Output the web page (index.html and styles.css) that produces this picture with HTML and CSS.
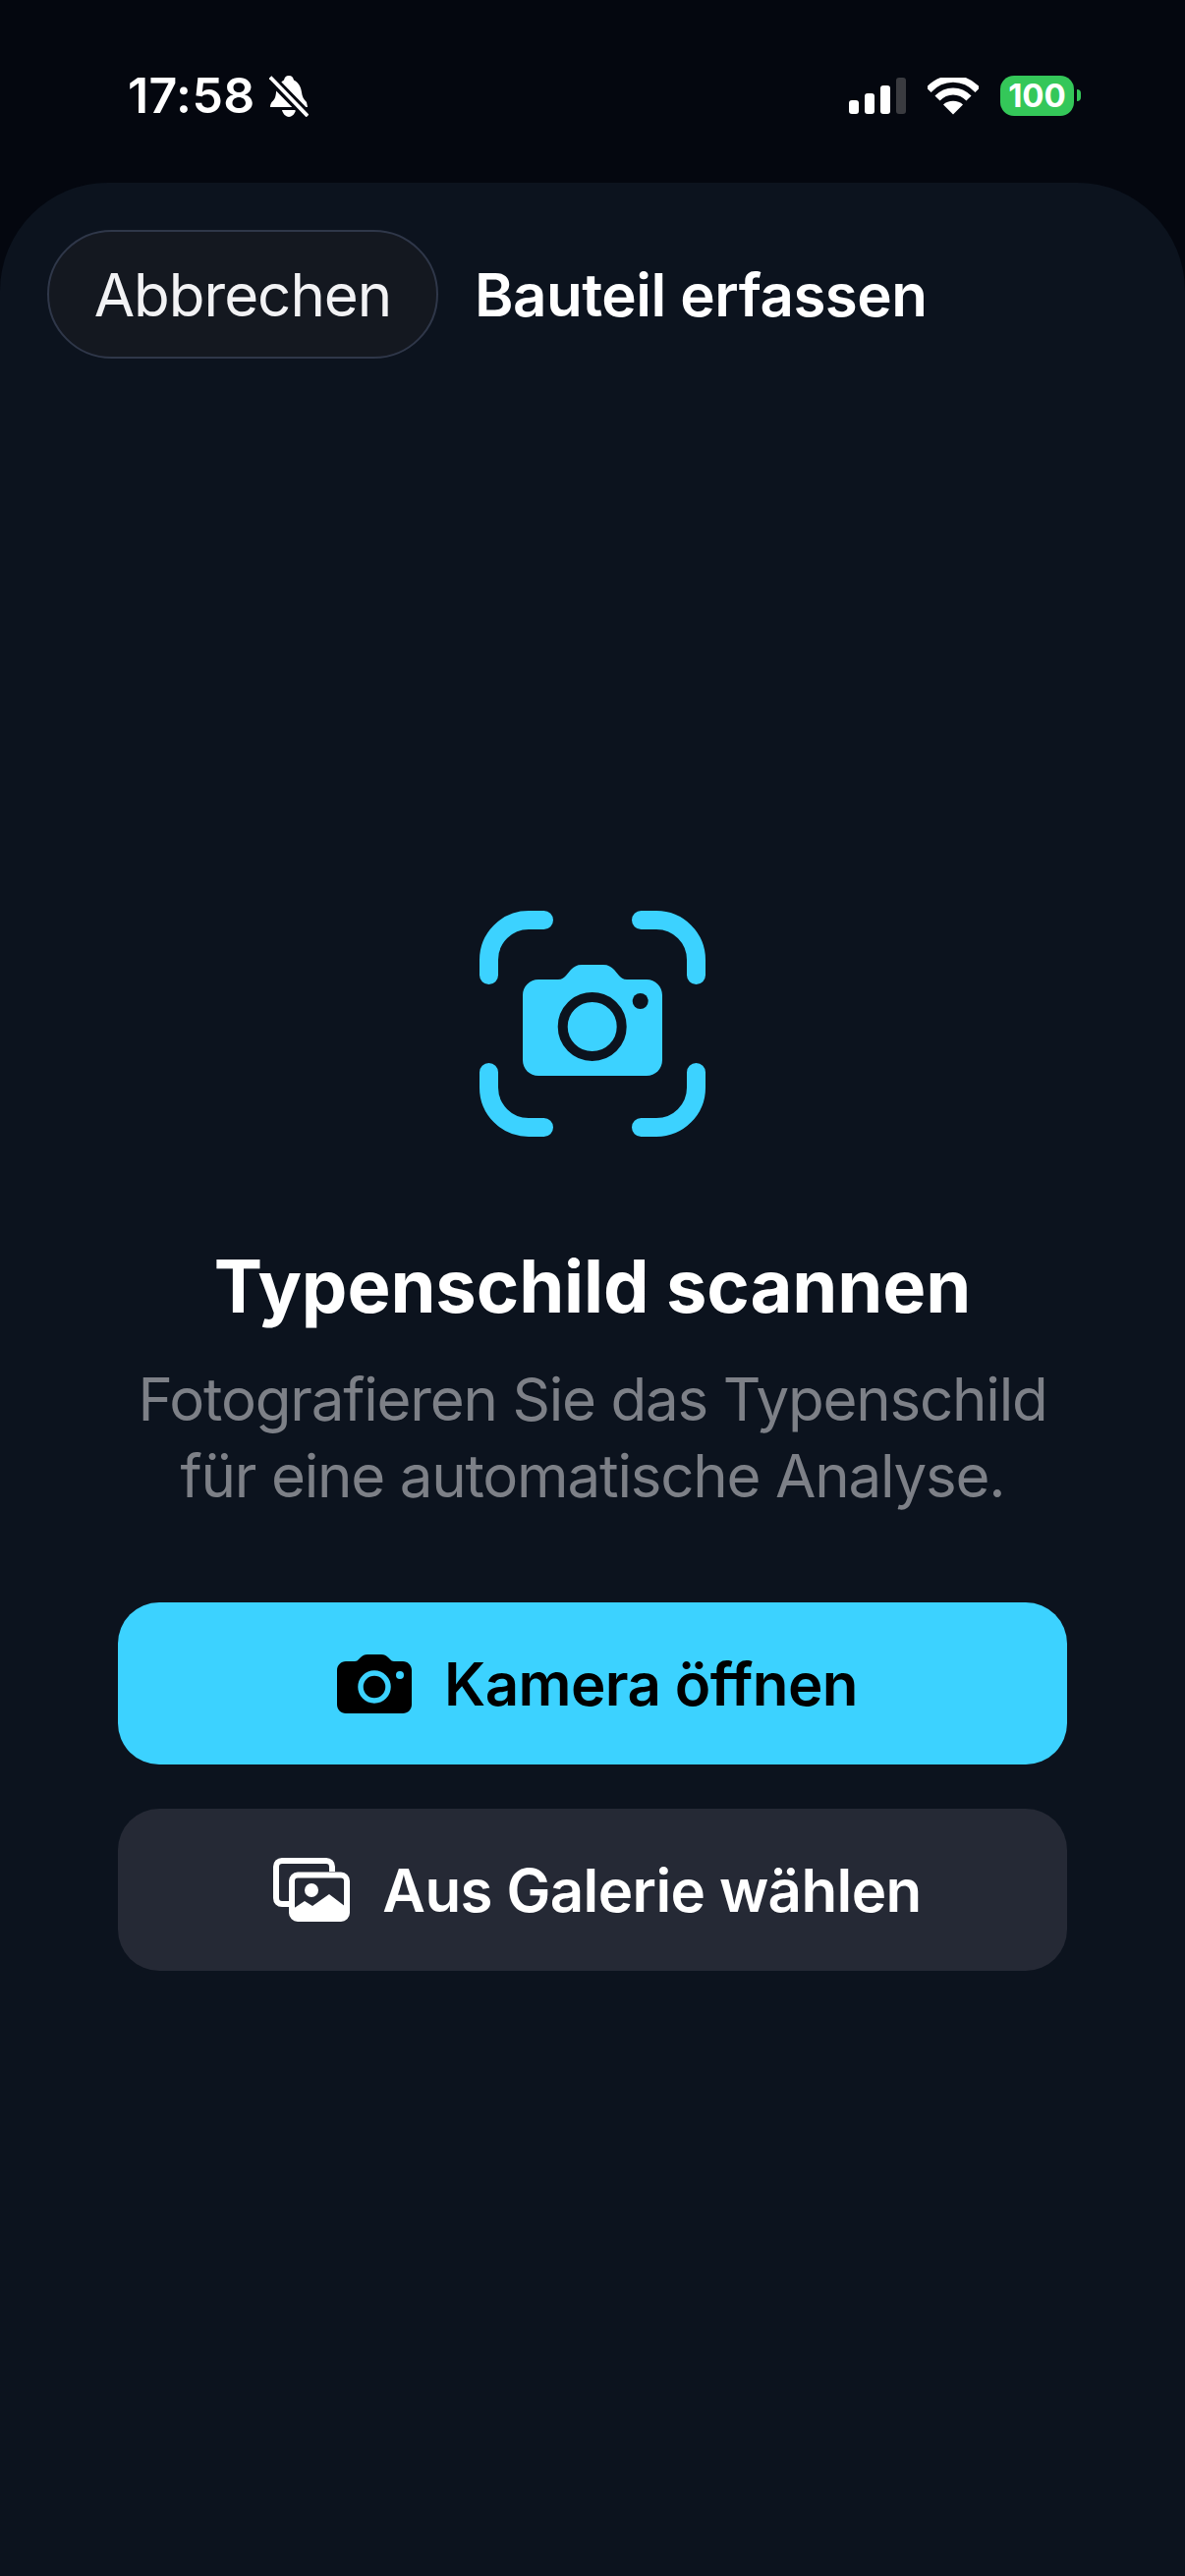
FILE: index.html
```html
<!DOCTYPE html>
<html lang="de">
<head>
    <meta charset="UTF-8">
    <title>Bauteil erfassen</title>
    <link rel="stylesheet" href="styles.css">
</head>
<body>
<div id="screen">
    <div class="status">
        <div class="status-left">
            <span class="time">17:58</span>
            <svg class="bell" width="40" height="42" viewBox="0 0 40 42">
                <path d="M20 0c3 0 4.500 2 5 4.500C30 7 32.500 12 33 17c.4 4 2 7 5 10l1 5H1c0-2 .5-3.500 1.500-5 3-2.500 4-5 4.500-10C7.500 11 11 7 15 4.500 15.500 2 17 0 20 0z" fill="#fff"/>
                <path d="M13 35h14c-.5 3-3.500 7-7 7s-6.500-4-7-7z" fill="#fff"/>
                <path d="M-1 0 L40 42" stroke="#04070f" stroke-width="10"/>
                <path d="M1 1.500 L39 41" stroke="#fff" stroke-width="3.800"/>
            </svg>
        </div>
        <div class="status-right">
            <div class="signal">
                <i class="bar b1"></i>
                <i class="bar b2"></i>
                <i class="bar b3"></i>
                <i class="bar b4"></i>
            </div>
            <svg class="wifi" width="52" height="38" viewBox="0 0 52 38">
                <path d="M1 12.500C15 -2.500 37 -2.500 51 12.500" fill="none" stroke="#fff" stroke-width="7"/>
                <path d="M10 21C19 11.500 33 11.500 42 21" fill="none" stroke="#fff" stroke-width="7"/>
                <path d="M26 37.500 L16 27.500C21 22.500 31 22.500 36 27.500z" fill="#fff"/>
            </svg>
            <div class="battery">
                <span class="level">100</span>
                <i class="nub"></i>
            </div>
        </div>
    </div>

    <div class="sheet">
        <div class="topbar">
            <button class="cancel">Abbrechen</button>
            <span class="title">Bauteil erfassen</span>
        </div>

        <div class="content">
            <svg class="scan" width="230" height="230" viewBox="0 0 230 230">
                <g fill="none" stroke="#3cd2ff" stroke-width="19" stroke-linecap="round">
                    <path d="M9.500 65.500V50A40.500 40.500 0 0 1 50 9.500H65.500"/>
                    <path d="M164.500 9.500H180A40.500 40.500 0 0 1 220.500 50V65.500"/>
                    <path d="M9.500 164.500V180A40.500 40.500 0 0 0 50 220.500H65.500"/>
                    <path d="M164.500 220.500H180A40.500 40.500 0 0 0 220.500 180V164.500"/>
                </g>
                <path d="M60 70H80C84 70 86 68 88 66L93 60C96 57 99 55 104 55H126C131 55 134 57 137 60L142 66C144 68 146 70 150 70H170C179 70 186 77 186 86V152C186 161 179 168 170 168H60C51 168 44 161 44 152V86C44 77 51 70 60 70z" fill="#3cd2ff"/>
                <circle cx="114.700" cy="118" r="30" fill="none" stroke="#0c131e" stroke-width="10"/>
                <circle cx="163.700" cy="92" r="8" fill="#0c131e"/>
            </svg>

            <h1>Typenschild scannen</h1>
            <p class="hint">Fotografieren Sie das Typenschild<br>für eine automatische Analyse.</p>

            <div class="actions">
                <button class="btn primary">
                    <svg width="76" height="60" viewBox="0 0 76 60">
                        <path d="M9 7H18C20 7 21 6 22 5L24 3C26 1 28 0 31 0H45C48 0 50 1 52 3L54 5C55 6 56 7 58 7H67C72 7 76 11 76 16V51C76 56 72 60 67 60H9C4 60 0 56 0 51V16C0 11 4 7 9 7z" fill="#000"/>
                        <circle cx="38" cy="33" r="14" fill="none" stroke="#3cd2ff" stroke-width="5.500"/>
                        <circle cx="64" cy="21" r="4" fill="#3cd2ff"/>
                    </svg>
                    <span>Kamera öffnen</span>
                </button>
                <button class="btn secondary">
                    <svg width="78" height="65" viewBox="0 0 78 65">
                        <path d="M16 47H9C5.500 47 3 44.500 3 41V9C3 5.500 5.500 3 9 3H54C57.500 3 60 5.500 60 9V14" fill="none" stroke="#fff" stroke-width="6"/>
                        <rect x="19" y="17.500" width="56" height="44.500" rx="6" fill="none" stroke="#fff" stroke-width="6"/>
                        <path d="M20 52L32 44L40 49L57 37L74 50V58L70 63H24L20 58z" fill="#fff"/>
                        <circle cx="39" cy="33" r="7" fill="#fff"/>
                    </svg>
                    <span>Aus Galerie wählen</span>
                </button>
            </div>
        </div>
    </div>
</div>
</body>
</html>
```

FILE: styles.css
```css
* {
    margin: 0;
    padding: 0;
    box-sizing: border-box;
}

body {
    width: 1206px;
    height: 2622px;
    overflow: hidden;
    background: #04070f;
    font-family: Inter, "Liberation Sans", sans-serif;
    color: #fff;
}

#screen {
    height: 100%;
    display: flex;
    flex-direction: column;
}

.status {
    height: 186px;
    flex-shrink: 0;
    display: flex;
    justify-content: space-between;
    align-items: flex-start;
    padding: 77px 113px 0 130px;
}

.status-left {
    display: flex;
    align-items: center;
    gap: 14px;
    height: 41px;
}

.time {
    font-size: 50px;
    font-weight: 600;
    line-height: 41px;
    letter-spacing: 0.4px;
}

.status-right {
    display: flex;
    align-items: flex-start;
    gap: 22px;
}

.signal {
    display: flex;
    align-items: flex-end;
    gap: 6px;
    height: 37px;
    margin-top: 2px;
}

.bar {
    display: block;
    width: 10px;
    background: #fff;
    border-radius: 3px;
}

.b1 { height: 14px; }
.b2 { height: 21px; }
.b3 { height: 29px; }
.b4 { height: 37px; background: #3a3b40; }

.wifi {
    margin-top: 2px;
}

.battery {
    position: relative;
    width: 75px;
    height: 41px;
    background: #34c759;
    border-radius: 14px;
    display: flex;
    align-items: center;
    justify-content: center;
}

.level {
    font-size: 33px;
    font-weight: 700;
    line-height: 41px;
}

.nub {
    position: absolute;
    left: 78px;
    top: 14px;
    width: 4px;
    height: 12px;
    background: #34c759;
    border-radius: 0 6px 6px 0;
}

.sheet {
    flex: 1;
    background: #0c131e;
    border-radius: 110px 110px 0 0;
    display: flex;
    flex-direction: column;
}

.topbar {
    display: flex;
    align-items: center;
    gap: 37px;
    padding: 48px 48px 0;
}

.cancel {
    width: 398px;
    height: 131px;
    border-radius: 66px;
    border: 2px solid #2f3749;
    background: #141820;
    color: #f2f2f4;
    font-family: inherit;
    font-size: 60px;
    font-weight: 400;
    letter-spacing: -1px;
}

.title {
    font-size: 60px;
    font-weight: 600;
    letter-spacing: -0.5px;
}

.content {
    display: flex;
    flex-direction: column;
    align-items: center;
    padding: 562px 120px 0;
}

h1 {
    margin-top: 108px;
    font-size: 74px;
    font-weight: 700;
    line-height: 88px;
    letter-spacing: -0.1px;
}

.hint {
    margin-top: 32px;
    font-size: 60px;
    font-weight: 400;
    line-height: 78px;
    text-align: center;
    color: #7d8087;
    letter-spacing: -1.2px;
}

.actions {
    align-self: stretch;
    display: flex;
    flex-direction: column;
    gap: 45px;
    margin-top: 90px;
}

.btn {
    height: 165px;
    border: none;
    border-radius: 42px;
    padding-left: 10px;
    display: flex;
    align-items: center;
    justify-content: center;
    gap: 33px;
    font-family: inherit;
    font-size: 60px;
    font-weight: 600;
    letter-spacing: -0.6px;
}

.primary {
    background: #3cd2ff;
    color: #000;
}

.secondary {
    background: #252935;
    color: #fff;
}
```
